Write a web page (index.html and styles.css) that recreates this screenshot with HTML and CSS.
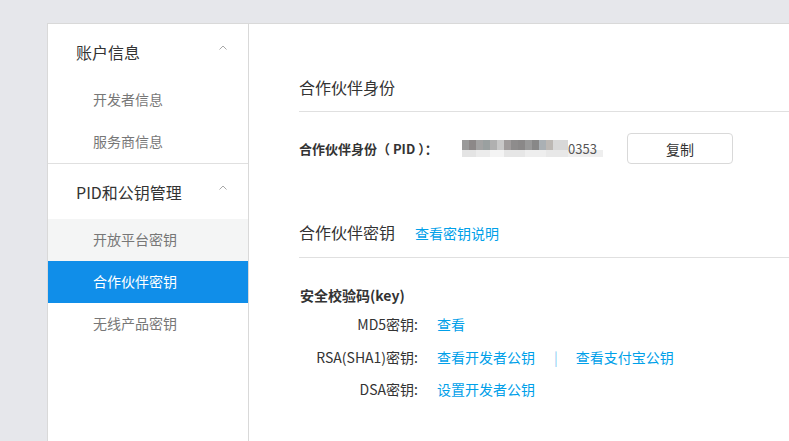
FILE: index.html
```html
<!DOCTYPE html>
<html lang="zh-CN">
<head>
<meta charset="utf-8">
<title>合作伙伴密钥</title>
<link rel="stylesheet" href="styles.css">
</head>
<body>
<div class="panel">
  <aside class="sidebar">
    <div class="group">
      <div class="group-head"><span>账户信息</span>
        <svg class="caret" width="8" height="5" viewBox="0 0 8 5"><path d="M0.5 4.5 L4 1 L7.5 4.5" fill="none" stroke="#a8a8a8" stroke-width="1"/></svg>
      </div>
      <div class="item">开发者信息</div>
      <div class="item">服务商信息</div>
    </div>
    <div class="group group-last">
      <div class="group-head"><span>PID和公钥管理</span>
        <svg class="caret" width="8" height="5" viewBox="0 0 8 5"><path d="M0.5 4.5 L4 1 L7.5 4.5" fill="none" stroke="#a8a8a8" stroke-width="1"/></svg>
      </div>
      <div class="item item-hover">开放平台密钥</div>
      <div class="item item-active">合作伙伴密钥</div>
      <div class="item">无线产品密钥</div>
    </div>
  </aside>
  <main class="content">
    <section class="sec">
      <h2 class="sec-title">合作伙伴身份</h2>
      <div class="pid-row">
        <span class="pid-label">合作伙伴身份（ PID ）：</span>
        <span class="pid-value"><span class="mosaic"></span><span class="pid-tail">0353</span></span>
        <button class="btn">复制</button>
      </div>
    </section>
    <section class="sec sec2">
      <h2 class="sec-title">合作伙伴密钥<a class="link title-link">查看密钥说明</a></h2>
      <div class="key-title">安全校验码(key)</div>
      <div class="keys">
        <span class="k-label">MD5密钥:</span>
        <span class="k-val"><a class="link">查看</a></span>
        <span class="k-label">RSA(SHA1)密钥:</span>
        <span class="k-val"><a class="link">查看开发者公钥</a><span class="sep">|</span><a class="link">查看支付宝公钥</a></span>
        <span class="k-label">DSA密钥:</span>
        <span class="k-val"><a class="link">设置开发者公钥</a></span>
      </div>
    </section>
  </main>
</div>
</body>
</html>
```
FILE: styles.css
```css
html, body {
  margin: 0;
  padding: 0;
  overflow: hidden;
}
body {
  background: #e6e7eb;
  font-family: "Noto Sans CJK SC", "Liberation Sans", sans-serif;
  color: #333;
  width: 789px;
  height: 441px;
}
.panel {
  margin: 23px 0 0 47px;
  width: 742px;
  height: 417px;
  background: #fff;
  border-top: 1px solid #d9d9d9;
  border-left: 1px solid #d9d9d9;
  display: flex;
}
.sidebar {
  width: 200px;
  flex: none;
  border-right: 1px solid #d9d9d9;
}
.group {
  border-bottom: 1px solid #e0e0e0;
}
.group-last {
  border-bottom: none;
}
.group-head {
  height: 55px;
  display: flex;
  align-items: center;
  justify-content: space-between;
  padding: 0 21px 0 28px;
  font-size: 16px;
  color: #333;
}
.caret {
  display: block;
  margin-top: -8px;
}
.item {
  height: 42px;
  line-height: 41px;
  padding-left: 45px;
  font-size: 14px;
  color: #777;
}
.item-hover {
  background: #f4f5f5;
}
.item-active {
  background: #108ee9;
  color: #fff;
}
.content {
  flex: 1;
  padding: 51px 0 0 50px;
}
.sec-title {
  margin: 0;
  font-size: 16px;
  font-weight: normal;
  line-height: 24px;
  padding-bottom: 12px;
  border-bottom: 1px solid #e0e0e0;
  color: #333;
}
.pid-row {
  margin-top: 21px;
  height: 31px;
  display: flex;
  align-items: center;
}
.pid-label {
  width: 163px;
  font-size: 13px;
  font-weight: bold;
}
.pid-value {
  width: 141px;
  margin-right: 24px;
  height: 18px;
  display: flex;
  align-items: flex-start;
}
.mosaic {
  width: 106px;
  height: 17px;
  display: block;
  background:
    linear-gradient(to right, #9a9a9a 0 7px, #8c8888 7px 14px, #a3a3a3 14px 21px, #9aa0a0 21px 28px, #b0b0b0 28px 35px, #c8c8c8 35px 42px, #a09c9c 42px 49px, #8e8c8c 49px 56px, #8a8888 56px 63px, #999 63px 70px, #888 70px 77px, #aab0b4 77px 84px, #bcb8b4 84px 91px, #d8d8d8 91px 106px) top / 100% 10px no-repeat,
    linear-gradient(to right, #e4e4e4 0 14px, #ececec 14px 28px, #f4f4f4 28px 42px, #e6e6e6 42px 63px, #eeeeee 63px 84px, #e8e8e8 84px 106px) bottom / 100% 7px no-repeat;
}
.pid-tail {
  font-size: 13px;
  color: #555;
  line-height: 17px;
  width: 35px;
  background: linear-gradient(to bottom, transparent 0 10px, #eeeeee 10px);
}
.btn {
  width: 106px;
  height: 31px;
  border: 1px solid #d9d9d9;
  border-radius: 4px;
  background: #fff;
  font-family: inherit;
  font-size: 14px;
  color: #333;
  padding: 0;
}
.sec2 {
  margin-top: 56px;
}
.link {
  color: #00a0e9;
  font-size: 14px;
  text-decoration: none;
}
.title-link {
  margin-left: 20px;
}
.key-title {
  margin-top: 27px;
  line-height: 20px;
  font-size: 14px;
  font-weight: bold;
  padding-left: 1px;
}
.keys {
  margin-top: 3px;
  display: grid;
  grid-template-columns: 119px auto;
  grid-auto-rows: 32.5px;
  column-gap: 19px;
  align-items: center;
  font-size: 14px;
}
.k-label {
  text-align: right;
  color: #333;
}
.k-val {
  display: flex;
  align-items: center;
}
.sep {
  color: #8ccbf3;
  margin: 0 18px 0 19px;
}
```
